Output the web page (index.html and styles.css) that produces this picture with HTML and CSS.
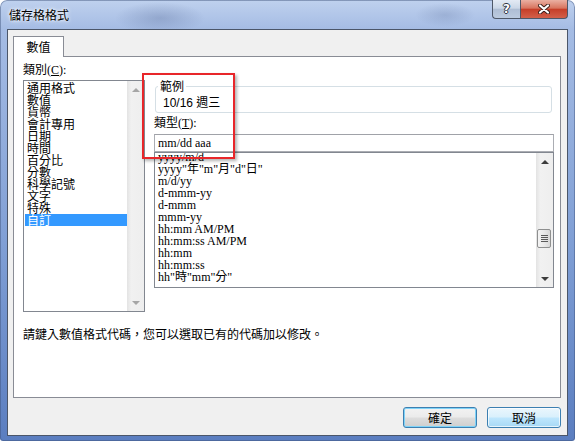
FILE: index.html
```html
<!DOCTYPE html>
<html>
<head>
	<meta charset="utf-8">
	<title>儲存格格式</title>
	<link rel="stylesheet" href="styles.css">
</head>
<body>

<div class="window">
	<div class="titlebar">
		<span class="title">儲存格格式</span>
		<div class="caption-buttons">
			<div class="caption-button help-button"><span>?</span></div>
			<div class="caption-button close-button">
				<svg width="12" height="10" viewBox="0 0 12 10">
					<path d="M2 1.5 L10 8.5 M10 1.5 L2 8.5" stroke="#3a1f1a" stroke-width="4" stroke-linecap="round"/>
					<path d="M2 1.5 L10 8.5 M10 1.5 L2 8.5" stroke="#ffffff" stroke-width="2.2" stroke-linecap="round"/>
				</svg>
			</div>
		</div>
	</div>

	<div class="client">
		<div class="tabs">
			<div class="tab">數值</div>
		</div>

		<div class="panel">
			<div class="columns">
				<div class="category-column">
					<div class="label">類別(<u>C</u>):</div>
					<div class="listbox category-list">
						<ul class="items">
							<li>通用格式</li>
							<li>數值</li>
							<li>貨幣</li>
							<li>會計專用</li>
							<li>日期</li>
							<li>時間</li>
							<li>百分比</li>
							<li>分數</li>
							<li>科學記號</li>
							<li>文字</li>
							<li>特殊</li>
							<li class="selected">自訂</li>
						</ul>
						<div class="scrollbar disabled">
							<span class="arrow up"></span>
							<span class="arrow down"></span>
						</div>
					</div>
				</div>

				<div class="format-column">
					<fieldset class="sample">
						<legend>範例</legend>
						<div class="sample-value">10/16 週三</div>
					</fieldset>
					<div class="label type-label">類型(<u>T</u>):</div>
					<div class="type-input">mm/dd aaa</div>
					<div class="listbox type-list">
						<ul class="items">
							<li>yyyy/m/d</li>
							<li>yyyy"年"m"月"d"日"</li>
							<li>m/d/yy</li>
							<li>d-mmm-yy</li>
							<li>d-mmm</li>
							<li>mmm-yy</li>
							<li>hh:mm AM/PM</li>
							<li>hh:mm:ss AM/PM</li>
							<li>hh:mm</li>
							<li>hh:mm:ss</li>
							<li>hh"時"mm"分"</li>
						</ul>
						<div class="scrollbar">
							<span class="arrow up"></span>
							<span class="thumb"></span>
							<span class="arrow down"></span>
						</div>
					</div>
				</div>
			</div>
			<p class="hint">請鍵入數值格式代碼，您可以選取已有的代碼加以修改。</p>
		</div>

		<div class="dialog-buttons">
			<button class="button default-button">確定</button>
			<button class="button hot-button">取消</button>
		</div>
	</div>

	<div class="annotation"></div>
</div>

</body>
</html>
```

FILE: styles.css
```css
* {
	box-sizing: border-box;
}

body {
	margin: 0;
	background: #ffffff;
	font-family: "Noto Sans CJK TC", sans-serif;
	font-size: 12px;
	color: #000000;
}

.window {
	position: relative;
	width: 575px;
	height: 441px;
	padding: 0 7px 5px 7px;
	display: flex;
	flex-direction: column;
	border-radius: 7px 7px 3px 3px;
	background:
		radial-gradient(ellipse 45px 16px at 160px 18px, rgba(80, 100, 145, 0.3), transparent),
		radial-gradient(ellipse 30px 12px at 445px 15px, rgba(80, 100, 145, 0.22), transparent),
		linear-gradient(#bfd1ee, #a5bce4 29px, #809fd5 55%, #5b7ec0);
	box-shadow: inset 0 0 0 1px rgba(60, 80, 120, 0.45);
}

/* title bar */

.titlebar {
	height: 29px;
	display: flex;
	justify-content: space-between;
	align-items: flex-start;
}

.title {
	padding: 8px 0 0 2px;
	line-height: 14px;
	text-shadow: 0 0 5px #ffffff, 0 0 3px #ffffff;
}

.caption-buttons {
	display: flex;
}

.caption-button {
	height: 19px;
	border: 1px solid #4e5868;
	border-top: none;
	display: flex;
	align-items: center;
	justify-content: center;
}

.help-button {
	width: 28px;
	border-right: none;
	border-radius: 0 0 0 4px;
	background: linear-gradient(#e3eaf4, #cbd7e7 45%, #afbed4 52%, #bccbdf);
	color: #ffffff;
	font-family: "DejaVu Sans", sans-serif;
	font-weight: bold;
	font-size: 12px;
	line-height: 12px;
	text-shadow: 1px 0 #2c3442, -1px 0 #2c3442, 0 1px #2c3442, 0 -1px #2c3442;
}

.close-button {
	width: 48px;
	border-radius: 0 0 4px 0;
	background: linear-gradient(#eab0a2, #d8755f 45%, #c63f29 52%, #d3604a);
}

/* client area */

.client {
	flex: 1;
	display: flex;
	flex-direction: column;
	background: #f0f0f0;
	border: 1px solid #4b5669;
	padding: 6px 6px 7px 5px;
}

.tabs {
	display: flex;
}

.tab {
	position: relative;
	width: 51px;
	height: 21px;
	margin-bottom: -1px;
	border: 1px solid #898c95;
	border-bottom: none;
	background: #ffffff;
	display: flex;
	align-items: center;
	justify-content: center;
	line-height: 12px;
}

.panel {
	flex: 1;
	border: 1px solid #898c95;
	background: #ffffff;
	padding: 7px 6px 0 9px;
}

.columns {
	display: flex;
	gap: 9px;
}

.label {
	line-height: 12px;
	font-family: "Liberation Serif", "Noto Sans CJK TC", serif;
}

.category-column {
	width: 122px;
}

.format-column {
	flex: 1;
	padding-top: 16px;
}

/* list boxes */

.listbox {
	display: flex;
	border: 1px solid #828790;
	background: #ffffff;
}

.items {
	flex: 1;
	margin: 0;
	padding: 1px 0 1px 1px;
	list-style: none;
	overflow: hidden;
}

.items li {
	height: 12px;
	line-height: 12px;
	padding-left: 2px;
	white-space: nowrap;
}

.category-list {
	height: 232px;
	margin-top: 4px;
}

.category-list .selected {
	background: #3399ff;
	color: #ffffff;
}

.type-list {
	height: 136px;
}

.type-list .items {
	padding: 0 0 0 1px;
	font-family: "Liberation Serif", "Noto Sans CJK TC", serif;
}

.type-list .items li:first-child {
	margin-top: -2px;
}

.scrollbar {
	width: 17px;
	display: flex;
	flex-direction: column;
	background: linear-gradient(to right, #e3e3e3, #f1f1f1 25%, #eeeeee);
}

.arrow {
	height: 17px;
	display: flex;
	align-items: center;
	justify-content: center;
}

.arrow::before {
	content: "";
	border-left: 4px solid transparent;
	border-right: 4px solid transparent;
}

.arrow.up::before {
	border-bottom: 4px solid #3c3c3c;
}

.arrow.down {
	margin-top: auto;
}

.arrow.down::before {
	border-top: 4px solid #3c3c3c;
}

.scrollbar.disabled .arrow.up::before {
	border-bottom-color: #a6a6a6;
}

.scrollbar.disabled .arrow.down::before {
	border-top-color: #a6a6a6;
}

.thumb {
	height: 19px;
	margin: 59px 2px 0 1px;
	border: 1px solid #8e8f8f;
	border-radius: 2px;
	background: linear-gradient(to right, #f4f4f4, #e9e9e9 50%, #d8d8d8);
	display: flex;
	align-items: center;
	justify-content: center;
}

.thumb::before {
	content: "";
	width: 7px;
	height: 7px;
	background: repeating-linear-gradient(#5a5a5a 0 1px, transparent 1px 2px);
}

/* sample group and type input */

.sample {
	margin: 0 2px 0 1px;
	padding: 5px 0 3px 2px;
	border: 1px solid #d5dfe5;
	border-radius: 3px;
	min-width: 0;
}

.sample legend {
	padding: 0 2px;
	line-height: 12px;
}

.sample-value {
	padding-left: 5px;
	line-height: 12px;
	font-family: "Liberation Sans", "Noto Sans CJK TC", sans-serif;
}

.type-label {
	margin-top: 4px;
}

.type-input {
	height: 18px;
	margin-top: 5px;
	padding: 0 3px;
	border: 1px solid #abadb3;
	border-top-color: #a0a2a8;
	line-height: 16px;
	font-family: "Liberation Serif", "Noto Sans CJK TC", serif;
}

.hint {
	margin: 16px 0 0 0;
	line-height: 12px;
}

/* dialog buttons */

.dialog-buttons {
	display: flex;
	justify-content: flex-end;
	gap: 10px;
	margin-top: 9px;
}

.button {
	width: 74px;
	height: 21px;
	padding: 0;
	border: 1px solid #3c7fb1;
	border-radius: 3px;
	font-family: "Noto Sans CJK TC", sans-serif;
	font-size: 12px;
	line-height: 12px;
	color: #000000;
	box-shadow: inset 0 0 0 1px rgba(255, 255, 255, 0.7);
}

.default-button {
	background: linear-gradient(#f2f2f2, #ebebeb 48%, #dddddd 52%, #cfcfcf);
	box-shadow: inset 0 0 0 1px #7fd3f8;
}

.hot-button {
	background: linear-gradient(#eaf6fd, #d9f0fc 48%, #bee6fd 52%, #a7d9f5);
}

/* red highlight drawn over the screenshot */

.annotation {
	position: absolute;
	left: 142px;
	top: 73px;
	width: 93px;
	height: 86px;
	border: 2px solid #e8262a;
	box-shadow: 2px 2px 3px rgba(0, 0, 0, 0.3);
}
```
